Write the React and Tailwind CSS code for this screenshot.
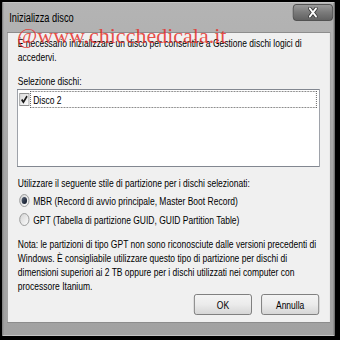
const TEXT = "font-['Liberation_Sans',Arial,sans-serif] text-[11px] leading-[14px] text-black whitespace-nowrap";

function CheckBox() {
  return (
    <span className="w-[13px] h-[13px] border border-[#8e8f8f] bg-gradient-to-br from-[#dcdcdc] to-[#fbfbfb] flex items-center justify-center shrink-0">
      <svg width="11" height="11" viewBox="0 0 11 11">
        <path d="M2 5.5 L4.3 8.2 L9 2.2" fill="none" stroke="#1a1a1a" strokeWidth="2" />
      </svg>
    </span>
  );
}

function Radio({ checked, label }) {
  return (
    <div className="h-[19px] flex items-center pl-[2px]">
      <span className="w-[13px] h-[13px] rounded-full border border-[#8e8f8f] bg-gradient-to-br from-[#d4d4d4] to-[#fcfcfc] flex items-center justify-center shrink-0">
        {checked && (
          <span className="w-[7px] h-[7px] rounded-full bg-gradient-to-br from-[#5a6578] to-[#0e1626]" />
        )}
      </span>
      <span className={`${TEXT} ml-[5px]`}>{label}</span>
    </div>
  );
}

function WinButton({ children }) {
  return (
    <div className="w-[75px] h-[21px] rounded-[3px] border border-[#707070] bg-gradient-to-b from-[#f4f4f4] via-[#ebebeb] to-[#d6d6d6] flex items-center justify-center">
      <span className={TEXT}>{children}</span>
    </div>
  );
}

export default function App() {
  return (
    <div className="w-[340px] h-[340px] relative overflow-hidden bg-black">
      <div className="w-[440px] h-[340px] origin-top-left scale-x-[0.7727] bg-black pt-[2px] pl-[3px] pr-[7px] pb-[4px] flex">
        {/* Cornice finestra */}
        <div className="flex-1 flex flex-col bg-gradient-to-b from-[#b4b4b4] via-[#a6a6a6] to-[#a2a2a2] border border-[#c4c4c4] pl-[5px] pr-[4px] pb-[12px]">
          <div className="h-[29px] flex items-start">
            <span className="self-center font-['Liberation_Sans',Arial,sans-serif] text-[12px] text-black pl-[3px]">
              Inizializza disco
            </span>
            <div className="ml-auto -mr-[3px] mt-[1px] w-[52px] h-[17px] rounded-[4px] border border-[#454545] bg-gradient-to-b from-[#9a9a9a] via-[#7a7a7a] to-[#626262] flex items-center justify-center">
              <svg width="14" height="11" viewBox="0 0 14 11">
                <path d="M3 1.5 L11 9.5 M11 1.5 L3 9.5" stroke="#3a3a3a" strokeWidth="4" strokeLinecap="round" />
                <path d="M3 1.5 L11 9.5 M11 1.5 L3 9.5" stroke="#ffffff" strokeWidth="2.2" strokeLinecap="round" />
              </svg>
            </div>
          </div>

          {/* Area client */}
          <div className="flex-1 bg-[#f0f0f0] border border-[#8d8d8d] pt-[3px] pl-[13px] pr-[13px] pb-[7px] flex flex-col">
            <p className={TEXT}>
              È necessario inizializzare un disco per consentire a Gestione dischi logici di
              <br />
              accedervi.
            </p>
            <p className={`${TEXT} mt-[10px]`}>Selezione dischi:</p>
            <div className="mt-[1px] -ml-px w-[392px] h-[78px] bg-white border border-[#828790] pt-[1px] pl-[2px] pr-[3px]">
              <div className="h-[17px] flex items-center">
                <CheckBox />
                <div className="flex-1 h-[17px] ml-[1px] border border-dotted border-[#555] flex items-center pl-[3px]">
                  <span className={TEXT}>Disco 2</span>
                </div>
              </div>
            </div>
            <p className={`${TEXT} mt-[9px]`}>
              Utilizzare il seguente stile di partizione per i dischi selezionati:
            </p>
            <div className="mt-[1px]">
              <Radio checked label="MBR (Record di avvio principale, Master Boot Record)" />
              <Radio label="GPT (Tabella di partizione GUID, GUID Partition Table)" />
            </div>
            <p className={`${TEXT} leading-[13.6px] mt-[8px]`}>
              Nota: le partizioni di tipo GPT non sono riconosciute dalle versioni precedenti di
              <br />
              Windows. È consigliabile utilizzare questo tipo di partizione per dischi di
              <br />
              dimensioni superiori ai 2 TB oppure per i dischi utilizzati nei computer con
              <br />
              processore Itanium.
            </p>
            <div className="mt-auto flex justify-end gap-[12px] pr-[1px]">
              <WinButton>OK</WinButton>
              <WinButton>Annulla</WinButton>
            </div>
          </div>
        </div>
      </div>

      {/* Filigrana */}
      <span className="absolute left-[17px] top-[25px] font-['Liberation_Serif','Times_New_Roman',serif] text-[22px] leading-[22px] text-[#e5302b]/85 whitespace-nowrap">
        @www.chicchedicala.it
      </span>
    </div>
  );
}
